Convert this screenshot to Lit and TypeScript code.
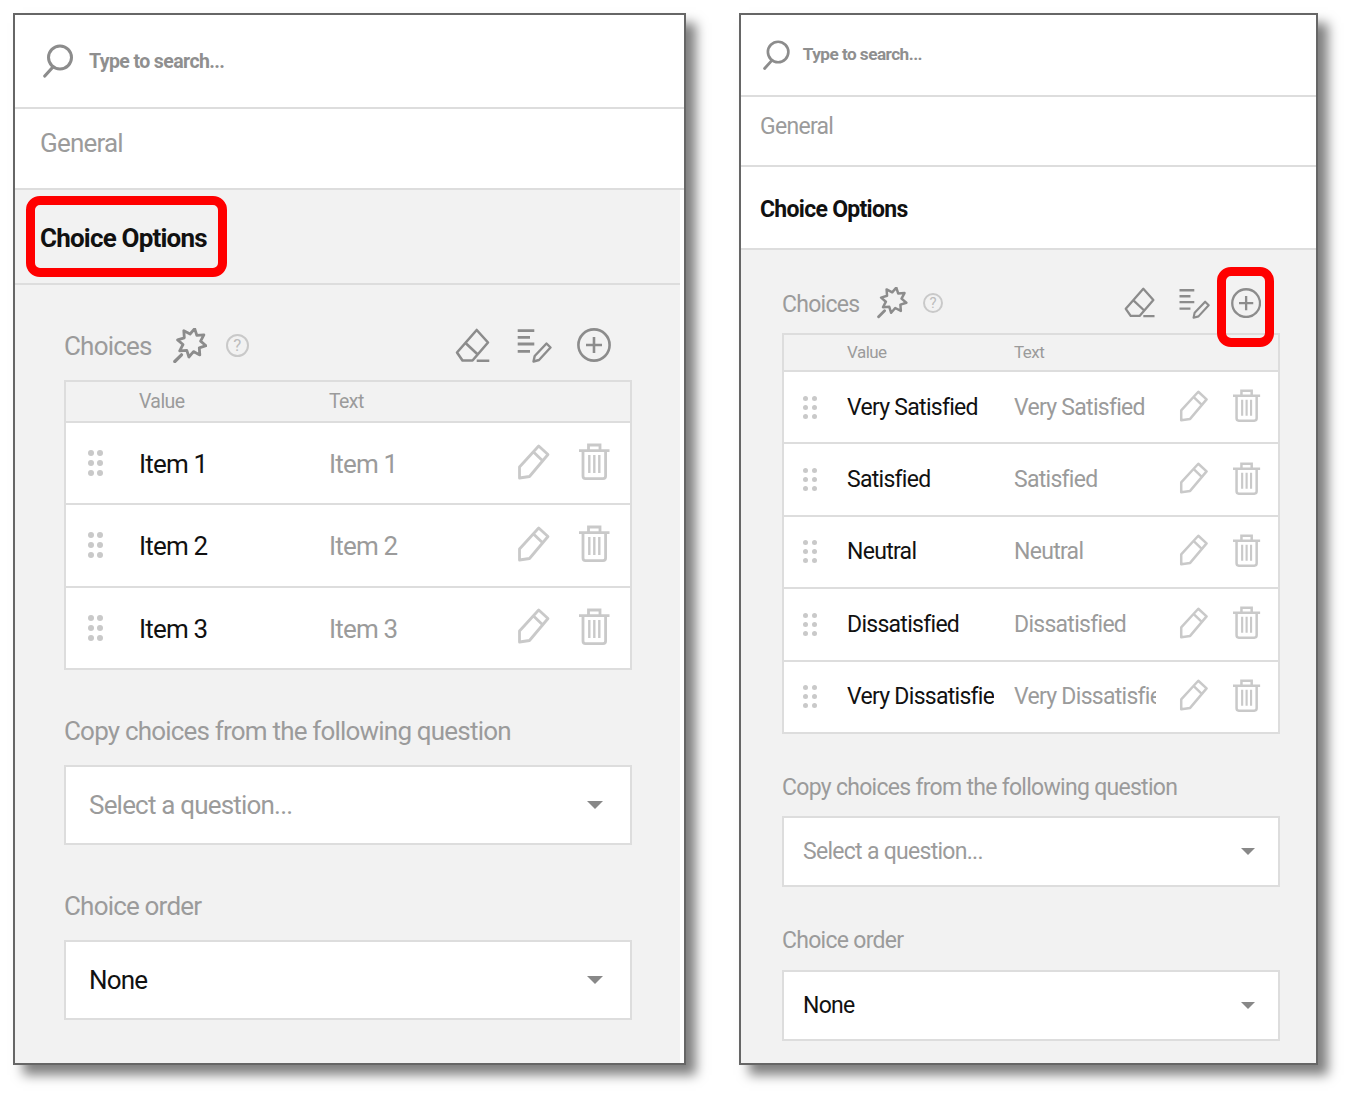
import { LitElement, html, css, svg } from "lit";
import { customElement, property } from "lit/decorators.js";

const starPoints = (() => {
  const pts: string[] = [];
  const n = 8;
  for (let i = 0; i < n * 2; i++) {
    const r = i % 2 === 0 ? 14.5 : 9;
    const a = (Math.PI * i) / n - Math.PI / 2 + 0.2;
    pts.push(`${(18.8 + r * Math.cos(a)).toFixed(1)},${(14.8 + r * Math.sin(a)).toFixed(1)}`);
  }
  return pts.join(" ");
})();

const iconSearch = svg`<svg class="i-search" viewBox="0 0 30 34"><circle cx="17" cy="13.5" r="11.5" fill="none" stroke="#8c8c8c" stroke-width="3"/><path d="M1.8 32 L9.5 23.5" stroke="#8c8c8c" stroke-width="3.2" stroke-linecap="round"/></svg>`;
const iconWand = svg`<svg class="i-wand" viewBox="0 0 34 35"><polygon points="${starPoints}" fill="none" stroke="#8c8c8c" stroke-width="2.8" stroke-linejoin="round"/><path d="M1.8 33.5 L8.5 26.8" stroke="#8c8c8c" stroke-width="3.2" stroke-linecap="round"/></svg>`;
const iconEraser = svg`<svg class="i-eraser" viewBox="0 0 35 35"><path d="M21.7 2 L33 14.5 L17.5 32.5 L7.5 32.5 L2 24.5 Z M10 14.5 L23.3 27 M21.7 32.8 H34.3" fill="none" stroke="#8c8c8c" stroke-width="2.6" stroke-linejoin="round"/></svg>`;
const iconEdit = svg`<svg class="i-edit" viewBox="0 0 36 36"><path d="M1.7 3.7 H18.3 M1.7 10.3 H14 M1.7 17 H18.3 M1.7 24.3 H14" stroke="#8c8c8c" stroke-width="2.8" fill="none"/><path d="M30.5 16.5 L34.5 20.5 L23 33 L17.5 34.5 L18.7 29 Z" fill="none" stroke="#8c8c8c" stroke-width="2.4" stroke-linejoin="round"/></svg>`;
const iconPlus = svg`<svg class="i-plus" viewBox="0 0 34 34"><circle cx="17" cy="17" r="15.6" fill="none" stroke="#8c8c8c" stroke-width="2.6"/><path d="M17 9 V25 M9 17 H25" stroke="#8c8c8c" stroke-width="2.6"/></svg>`;
const iconPencil = svg`<svg class="i-pencil" viewBox="0 0 33 36"><path d="M21.7 2 L31 10.5 L12.5 32.5 L2.5 34 L2.5 23 Z M16 7.5 L25.3 16.5" fill="none" stroke="#c9c9c9" stroke-width="2.8" stroke-linejoin="round"/></svg>`;
const iconTrash = svg`<svg class="i-trash" viewBox="0 0 31 37"><path d="M0 7.7 H30.5 M9.5 7.7 V2 H21 V7.7 M4 7.7 V33 Q4 35.6 6.5 35.6 H24 Q26.6 35.6 26.6 33 V7.7" fill="none" stroke="#c9c9c9" stroke-width="2.8"/><path d="M10.3 12 V30 M15.3 12 V30 M20.3 12 V30" stroke="#c9c9c9" stroke-width="2.4"/></svg>`;

@customElement("choice-panel")
class ChoicePanel extends LitElement {
  @property() variant = "lg";
  @property({ type: Array }) items: string[] = [];
  @property() order = "None";

  static styles = css`
    :host { display: block; font-family: Roboto, "Liberation Sans", sans-serif; color: #9b9b9b; }
    .panel, .panel * { letter-spacing: -0.031em; }
    .lg {
      --k: 1; --w: 673px; --search-h: 94px; --search-pl: 28px; --search-gap: 16px; --search-fs: 19.5px;
      --gen-h: 81px; --gen-pb: 12px; --cho-h: 95px; --cho-pt: 2px; --tab-pl: 25px; --tab-fs: 26px; --pad-x: 49px; --pad-r: 48px; --gut: 4px;
      --pad-t: 40px; --hd-h: 40px; --hd-mb: 15px; --hd-fs: 26px; --hd-pr: 21px;
      --g1: 21px; --g2: 19px; --g3: 26px; --g4: 25px;
      --th-h: 39px; --th-pb: 0px; --row-h: 82.33px; --c1: 73px; --c2: 190px; --c3: 170px; --row-fs: 26px; --th-fs: 19.5px; --cell-pt: 2px;
      --act-gap: 29px; --act-pr: 20px; --dot: 6px; --dot-x: 3px; --dot-y: 4px; --dot-pl: 22px;
      --lab-mt: 46px; --lab-h: 30px; --lab-mb: 19px; --sel-h: 80px; --sel-pl: 23px; --sel-pr: 27px;
      --help: 23px; --help-fs: 17px; --caret: 8px;
    }
    .sm {
      --k: 0.89; --w: 579px; --search-h: 82px; --search-pl: 22px; --search-gap: 13px; --search-fs: 17.2px;
      --gen-h: 70px; --gen-pb: 10px; --cho-h: 83px; --cho-pt: 4px; --tab-pl: 19px; --tab-fs: 23px; --pad-x: 41px; --pad-r: 36px; --gut: 0px;
      --pad-t: 35px; --hd-h: 36px; --hd-mb: 12px; --hd-fs: 23px; --hd-pr: 19px;
      --g1: 18px; --g2: 15px; --g3: 23px; --g4: 21px;
      --th-h: 35px; --th-pb: 2px; --row-h: 72.4px; --c1: 63px; --c2: 167px; --c3: 142px; --row-fs: 23px; --th-fs: 17px; --cell-pt: 0px;
      --act-gap: 25px; --act-pr: 17px; --dot: 5px; --dot-x: 4px; --dot-y: 4px; --dot-pl: 19px;
      --lab-mt: 40px; --lab-h: 28px; --lab-mb: 14.5px; --sel-h: 71px; --sel-pl: 19px; --sel-pr: 23px;
      --help: 20px; --help-fs: 15px; --caret: 7px;
    }
    .panel {
      box-sizing: border-box; width: var(--w); height: 1052px; border: 2px solid #666; background: #fff;
      box-shadow: 10px 10px 11px rgba(0, 0, 0, 0.5); display: flex; flex-direction: column;
    }
    .search {
      box-sizing: border-box; height: var(--search-h); border-bottom: 2px solid #ddd; display: flex;
      align-items: center; gap: var(--search-gap); padding-left: var(--search-pl);
      font-size: var(--search-fs); font-weight: 700; color: #8f8f8f;
    }
    .sm .search span { margin-top: -2px; }
    svg { display: block; flex: none; }
    .i-search { width: calc(var(--k) * 30px); height: calc(var(--k) * 34px); }
    .i-wand { width: calc(var(--k) * 34px); height: calc(var(--k) * 35px); }
    .i-eraser { width: calc(var(--k) * 35px); height: calc(var(--k) * 35px); }
    .i-edit { width: calc(var(--k) * 36px); height: calc(var(--k) * 36px); }
    .i-plus { width: calc(var(--k) * 34px); height: calc(var(--k) * 34px); }
    .i-pencil { width: calc(var(--k) * 33px); height: calc(var(--k) * 36px); }
    .i-trash { width: calc(var(--k) * 31px); height: calc(var(--k) * 37px); }
    .tab {
      position: relative; box-sizing: border-box; display: flex; align-items: center; padding-left: var(--tab-pl);
      border-bottom: 2px solid #ddd; font-size: var(--tab-fs);
    }
    .general { height: var(--gen-h); color: #9b9b9b; padding-bottom: var(--gen-pb); }
    .choice { height: var(--cho-h); color: #111; font-weight: 700; padding-top: var(--cho-pt); margin-right: var(--gut); }
    .lg .choice { background: #f2f2f2; }
    .body { flex: 1; background: #f2f2f2; margin-right: var(--gut); padding: var(--pad-t) var(--pad-r) 0 var(--pad-x); }
    .head {
      height: var(--hd-h); margin-bottom: var(--hd-mb); display: flex; align-items: center;
      padding-right: var(--hd-pr); font-size: var(--hd-fs);
    }
    .name { padding-top: 2px; }
    .wand { margin-left: var(--g1); }
    .help {
      margin-left: var(--g2); box-sizing: border-box; width: var(--help); height: var(--help); border-radius: 50%;
      border: 2px solid #c9c9c9; color: #bdbdbd; font-size: var(--help-fs); display: flex; align-items: center; justify-content: center;
    }
    .spacer { flex: 1; }
    .edit { margin-left: var(--g3); }
    .plus { margin-left: var(--g4); position: relative; }
    .mark { position: absolute; box-sizing: border-box; border: 9px solid #f00; border-radius: 14px; }
    .mark-tab { left: 11px; top: 6px; width: 201px; height: 81px; }
    .mark-plus { left: -14px; top: -21px; width: 57px; height: 80px; }
    .table { border: 2px solid #ddd; }
    .cols { display: grid; grid-template-columns: var(--c1) var(--c2) var(--c3) 1fr; align-items: center; }
    .thead { box-sizing: border-box; height: var(--th-h); padding-bottom: var(--th-pb); font-size: var(--th-fs); }
    .row {
      box-sizing: border-box; height: var(--row-h); background: #fff; border-top: 2px solid #ddd; font-size: var(--row-fs);
    }
    .clip { overflow: hidden; white-space: nowrap; padding-top: var(--cell-pt); }
    .value { color: #111; margin-right: 20px; }
    .dots {
      display: grid; grid-template-columns: repeat(2, var(--dot)); gap: var(--dot-y) var(--dot-x); padding-left: var(--dot-pl);
    }
    .dots i { width: var(--dot); height: var(--dot); border-radius: 50%; background: #c9c9c9; }
    .acts { display: flex; align-items: center; justify-content: flex-end; gap: var(--act-gap); padding-right: var(--act-pr); padding-bottom: 3px; }
    .label { height: var(--lab-h); line-height: var(--lab-h); margin-top: var(--lab-mt); margin-bottom: var(--lab-mb); font-size: var(--hd-fs); }
    .select {
      box-sizing: border-box; height: var(--sel-h); background: #fff; border: 2px solid #ddd; display: flex; align-items: center;
      justify-content: space-between; padding: 0 var(--sel-pr) 0 var(--sel-pl); font-size: var(--row-fs);
    }
    .select.dark { color: #111; }
    .caret {
      width: 0; height: 0; border-left: var(--caret) solid transparent; border-right: var(--caret) solid transparent;
      border-top: var(--caret) solid #888;
    }
  `;

  render() {
    const lg = this.variant === "lg";
    return html`<div class="panel ${this.variant}">
      <div class="search">${iconSearch}<span>Type to search...</span></div>
      <div class="tab general">General</div>
      <div class="tab choice">Choice Options${lg ? html`<div class="mark mark-tab"></div>` : ""}</div>
      <div class="body">
        <div class="head">
          <span class="name">Choices</span>
          <span class="wand">${iconWand}</span>
          <span class="help">?</span>
          <span class="spacer"></span>
          ${iconEraser}
          <span class="edit">${iconEdit}</span>
          <span class="plus">${iconPlus}${lg ? "" : html`<div class="mark mark-plus"></div>`}</span>
        </div>
        <div class="table">
          <div class="cols thead"><span></span><span>Value</span><span>Text</span><span></span></div>
          ${this.items.map(
            (t) => html`<div class="cols row">
              <div class="dots"><i></i><i></i><i></i><i></i><i></i><i></i></div>
              <div class="clip value">${t}</div>
              <div class="clip">${t}</div>
              <div class="acts">${iconPencil}${iconTrash}</div>
            </div>`
          )}
        </div>
        <div class="label">Copy choices from the following question</div>
        <div class="select"><span>Select a question...</span><span class="caret"></span></div>
        <div class="label">Choice order</div>
        <div class="select dark"><span>${this.order}</span><span class="caret"></span></div>
      </div>
    </div>`;
  }
}

@customElement("app-root")
class AppRoot extends LitElement {
  static styles = css`
    :host { display: block; width: 1352px; height: 1100px; background: #fff; overflow: hidden; }
    .wrap { display: flex; gap: 53px; padding: 13px 0 0 13px; }
  `;
  render() {
    return html`<div class="wrap">
      <choice-panel variant="lg" .items=${["Item 1", "Item 2", "Item 3"]}></choice-panel>
      <choice-panel variant="sm" .items=${["Very Satisfied", "Satisfied", "Neutral", "Dissatisfied", "Very Dissatisfied"]}></choice-panel>
    </div>`;
  }
}
